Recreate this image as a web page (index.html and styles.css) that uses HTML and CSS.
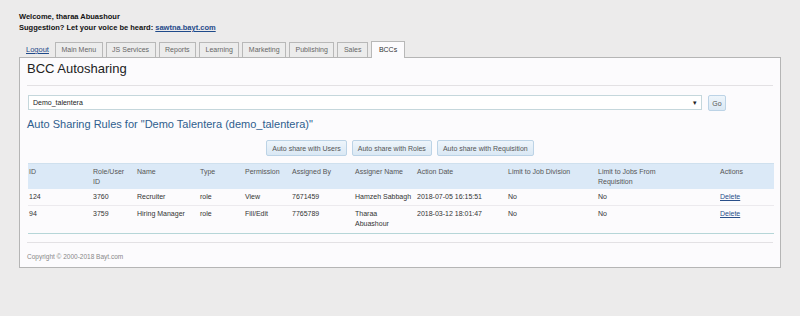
FILE: index.html
```html
<!DOCTYPE html>
<html lang="en">
<head>
  <meta charset="UTF-8" />
  <title>BCC Autosharing</title>
  <link rel="stylesheet" href="styles.css">
</head>
<body>
  <div class="welcome">
    <div>Welcome, tharaa Abuashour</div>
    <div>Suggestion? Let your voice be heard: <a href="#">sawtna.bayt.com</a></div>
  </div>

  <ul class="tabs">
    <li class="tab-link"><a href="#">Logout</a></li>
    <li class="tab">Main Menu</li>
    <li class="tab">JS Services</li>
    <li class="tab">Reports</li>
    <li class="tab">Learning</li>
    <li class="tab">Marketing</li>
    <li class="tab">Publishing</li>
    <li class="tab">Sales</li>
    <li class="tab active">BCCs</li>
  </ul>

  <div class="panel">
    <h1>BCC Autosharing</h1>
    <div class="rule"></div>

    <div class="picker">
      <div class="select">
        <span>Demo_talentera</span>
        <span class="caret">&#9662;</span>
      </div>
      <button class="btn go">Go</button>
    </div>

    <h2>Auto Sharing Rules for "Demo Talentera (demo_talentera)"</h2>

    <div class="actions">
      <button class="btn">Auto share with Users</button>
      <button class="btn">Auto share with Roles</button>
      <button class="btn">Auto share with Requisition</button>
    </div>

    <table class="rules">
      <colgroup>
        <col style="width: 64px">
        <col style="width: 44px">
        <col style="width: 63px">
        <col style="width: 45px">
        <col style="width: 47px">
        <col style="width: 63px">
        <col style="width: 62px">
        <col style="width: 91px">
        <col style="width: 90px">
        <col style="width: 122px">
        <col style="width: 55px">
      </colgroup>
      <thead>
        <tr>
          <th>ID</th>
          <th>Role/User<br>ID</th>
          <th>Name</th>
          <th>Type</th>
          <th>Permission</th>
          <th>Assigned By</th>
          <th>Assigner Name</th>
          <th>Action Date</th>
          <th>Limit to Job Division</th>
          <th>Limit to Jobs From<br>Requisition</th>
          <th>Actions</th>
        </tr>
      </thead>
      <tbody>
        <tr>
          <td>124</td>
          <td>3760</td>
          <td>Recruiter</td>
          <td>role</td>
          <td>View</td>
          <td>7671459</td>
          <td class="nowrap">Hamzeh Sabbagh</td>
          <td>2018-07-05 16:15:51</td>
          <td>No</td>
          <td>No</td>
          <td><a href="#">Delete</a></td>
        </tr>
        <tr>
          <td>94</td>
          <td>3759</td>
          <td>Hiring Manager</td>
          <td>role</td>
          <td>Fill/Edit</td>
          <td>7765789</td>
          <td>Tharaa<br>Abuashour</td>
          <td>2018-03-12 18:01:47</td>
          <td>No</td>
          <td>No</td>
          <td><a href="#">Delete</a></td>
        </tr>
      </tbody>
    </table>

    <div class="rule bottom"></div>
    <div class="copyright">Copyright &copy; 2000-2018 Bayt.com</div>
  </div>
</body>
</html>
```

FILE: styles.css
```css
body {
  margin: 0;
  background: #ecebeb;
  font-family: "Liberation Sans", Arial, sans-serif;
  font-size: 7px;
  color: #333;
}

a {
  color: #1f4a8a;
}

.welcome {
  padding: 11px 0 0 19px;
  font-weight: bold;
  font-size: 7.5px;
  color: #111;
  line-height: 11px;
}

.tabs {
  list-style: none;
  margin: 0;
  padding: 0 0 0 26px;
  margin-top: 8px;
  display: flex;
  align-items: flex-end;
  gap: 3px;
  height: 16px;
}

.tab-link {
  height: 15px;
  line-height: 15px;
  margin-right: 3px;
  font-size: 7.5px;
}

.tab {
  height: 14px;
  line-height: 14px;
  padding: 0 5.5px;
  background: #ececec;
  border: 1px solid #b8b8b8;
  border-bottom: none;
  color: #666;
}

.tab.active {
  height: 16px;
  line-height: 16px;
  background: #fcfbfd;
  color: #333;
  position: relative;
  top: 1px;
  padding: 0 7px;
}

.panel {
  margin-left: 19px;
  width: 746px;
  padding: 0 7px;
  height: 209px;
  background: #fcfbfd;
  border: 1px solid #b5b5b5;
}

.panel h1 {
  margin: 0;
  padding-top: 3px;
  font-size: 13px;
  font-weight: normal;
  color: #222;
  line-height: 16px;
}

.rule {
  height: 1px;
  background: #e3e1e4;
  margin-top: 8px;
}

.picker {
  display: flex;
  gap: 6px;
  margin-top: 9px;
  padding-left: 1px;
}

.select {
  width: 668px;
  height: 13px;
  border: 1px solid #c5d7dc;
  background: #fff;
  display: flex;
  justify-content: space-between;
  align-items: center;
  padding: 0 0 0 4px;
  color: #222;
}

.caret {
  font-size: 7px;
  margin-right: 4px;
  color: #222;
}

.btn {
  font-family: inherit;
  font-size: 7px;
  color: #555;
  background: linear-gradient(#eef5fb, #dae8f4);
  border: 1px solid #bcd3e6;
  border-radius: 2px;
  height: 16px;
  padding: 0 5px;
}

.btn.go {
  width: 18px;
  padding: 0;
  text-align: center;
}

.panel h2 {
  margin: 6px 0 0 0;
  font-size: 11px;
  font-weight: normal;
  color: #2f5e8e;
  line-height: 14px;
}

.actions {
  display: flex;
  justify-content: center;
  gap: 5px;
  margin-top: 9px;
}

.rules {
  margin-top: 7px;
  margin-left: 1px;
  width: 746px;
  table-layout: fixed;
  border-collapse: collapse;
  border-bottom: 1px solid #b6d6d8;
}

.rules th {
  background: #dbe9f7;
  font-weight: normal;
  color: #555;
  text-align: left;
  vertical-align: top;
  padding: 3px 1px 2px 1px;
  line-height: 10px;
  height: 20px;
  border-top: 1px solid #cfe0ee;
}

.rules td {
  padding: 3px 1px;
  line-height: 10px;
  vertical-align: top;
  color: #333;
  border-top: 1px solid #eceaee;
}

.rules td.nowrap {
  white-space: nowrap;
}

.rules tbody tr:first-child td {
  border-top: none;
}

.rules tbody tr:last-child td {
  padding-bottom: 4px;
}

.rules a {
  color: #2a4f8a;
}

.rule.bottom {
  margin-top: 8px;
}

.copyright {
  margin-top: 10px;
  font-size: 6.5px;
  color: #888;
}
```
